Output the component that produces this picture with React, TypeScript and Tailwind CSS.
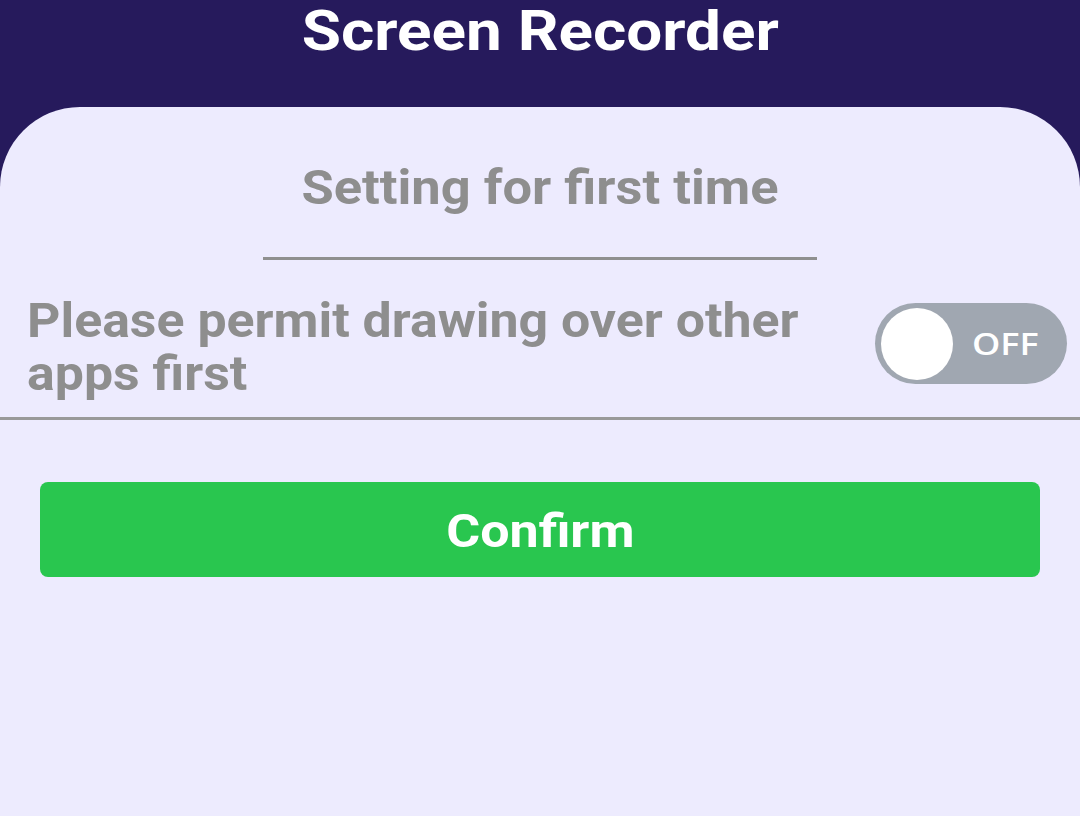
import React from "react";

export default function App() {
  return (
    <div className="w-[1080px] h-[816px] bg-[#261a5c] flex flex-col overflow-hidden" style={{ fontFamily: "Roboto, 'Liberation Sans', sans-serif" }}>
      <div className="h-[107px] flex justify-center">
        <h1 className="text-[56px] leading-[56px] font-bold text-white mt-[3px] scale-x-[1.14] origin-center whitespace-nowrap">Screen Recorder</h1>
      </div>
      <div className="flex-1 bg-[#edebfe] rounded-t-[80px] flex flex-col">
        <div className="flex justify-center pt-[54px]">
          <div className="text-[49px] leading-[54px] font-bold text-[#8e8e8e] scale-x-[1.07] origin-center whitespace-nowrap">Setting for first time</div>
        </div>
        <div className="flex justify-center mt-[42px]">
          <div className="w-[554px] h-[3px] bg-[#8f8f8f]" />
        </div>
        <div className="flex items-start justify-between pl-[27px] pr-[13px] pt-[34px] pb-[17px]">
          <div className="text-[48px] leading-[53px] font-bold text-[#8e8e8e] w-[740px] scale-x-[1.08] origin-left">
            Please permit drawing over other apps first
          </div>
          <div className="mt-[9px] w-[192px] h-[81px] rounded-full bg-[#a0a7b1] flex items-center pl-[6px]">
            <div className="w-[72px] h-[72px] rounded-full bg-white" />
            <span className="ml-[19px] text-white text-[30px] font-semibold leading-none scale-x-[1.2] origin-left" style={{ fontFamily: "'Open Sans', sans-serif" }}>OFF</span>
          </div>
        </div>
        <div className="h-[3px] bg-[#999999]" />
        <div className="px-[40px] mt-[62px]">
          <button className="w-full h-[95px] rounded-[8px] bg-[#29c64f] text-white flex items-center justify-center pt-[3px]">
            <span className="text-[46px] font-bold scale-x-[1.13] origin-center">Confirm</span>
          </button>
        </div>
      </div>
    </div>
  );
}
